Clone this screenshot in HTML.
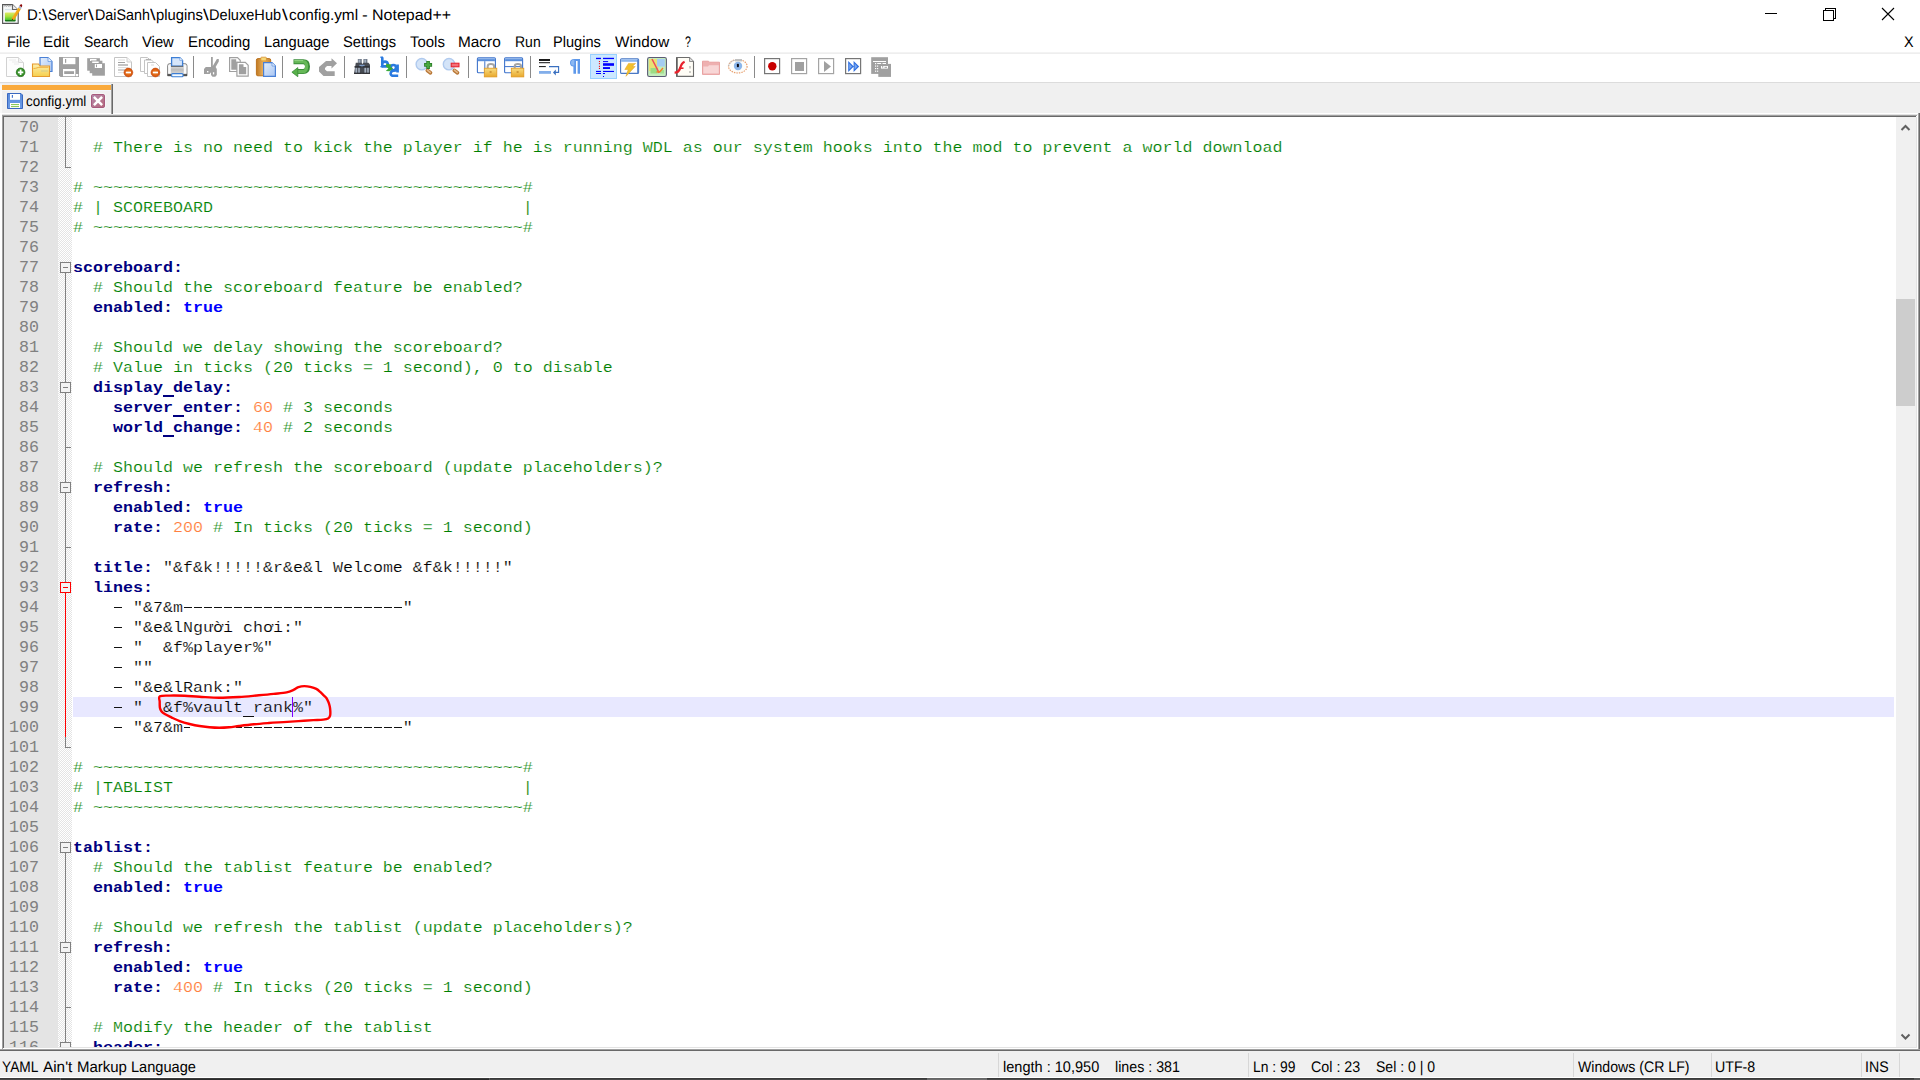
<!DOCTYPE html>
<html lang="en"><head><meta charset="utf-8"><title>D:\Server\DaiSanh\plugins\DeluxeHub\config.yml - Notepad++</title>
<style>
html,body{margin:0;padding:0}
body{width:1920px;height:1080px;overflow:hidden;background:#fff;position:relative;font-family:"Liberation Sans",sans-serif}
.a{position:absolute}
.t{position:absolute;white-space:pre;text-rendering:geometricPrecision;line-height:20px;height:20px;transform-origin:0 0;display:block}
#ed{position:absolute;left:0;top:117px;width:1920px;height:930px;overflow:hidden;background:#fff}
#nm{position:absolute;left:4px;top:0;width:54px;height:930px;background:#e4e4e4}
#fm{position:absolute;left:58px;top:0;width:14px;height:930px;background-color:#fff;background-image:conic-gradient(#fff 25%,#e4e4e4 0 50%,#fff 0 75%,#e4e4e4 0);background-size:2px 2px}
.ln,.no{position:absolute;height:19px;padding-top:1px;line-height:20px;font-family:"Liberation Mono",monospace;font-size:16.6667px;white-space:pre}
.ln{left:73px;width:1821px;color:#000;-webkit-text-stroke:.2px #fff}
.hl{-webkit-text-stroke-color:#e8e8ff}
.dash{position:absolute;height:1px;background:repeating-linear-gradient(90deg,transparent 0,transparent 1px,#111 1px,#111 9px,transparent 9px,transparent 10px)}
.ln{transform:scaleY(.89);transform-origin:0 15.5px}
.no{left:4px;width:35px;text-align:right;color:#808080}

.c{color:#008000}.k{color:#000080;font-weight:bold;-webkit-text-stroke:0}.w{color:#0000ff;font-weight:bold;-webkit-text-stroke:0}.n{color:#ff8040}
.sep{position:absolute;top:56px;width:1px;height:22px;background:#8a8a8a}
.ssep{position:absolute;top:1053px;width:1px;height:24px;background:#d7d7d7}
.ic{position:absolute;top:57px;width:20px;height:20px}
</style></head><body>
<!-- title bar -->
<svg class="a" style="left:0;top:0" width="28" height="28" viewBox="0 0 28 28">
<defs><linearGradient id="tg" x1="0" y1="0" x2="0" y2="1"><stop offset="0" stop-color="#e2ea68"/><stop offset=".45" stop-color="#a4e03c"/><stop offset=".8" stop-color="#4cc430"/><stop offset=".86" stop-color="#187818"/><stop offset="1" stop-color="#1c7c1c"/></linearGradient>
<linearGradient id="tp" x1="0" y1="0" x2="1" y2="1"><stop offset="0" stop-color="#fbd24a"/><stop offset=".5" stop-color="#f2a814"/><stop offset="1" stop-color="#c87c10"/></linearGradient></defs>
<path d="M2.600 4.600H12.500L18.200 10.300V23.400H2.600Z" fill="#f6f8f8" stroke="#565656" stroke-width="1.100"/>
<path d="M12.500 4.600V9.500H17.600" fill="#ececec" stroke="#666" stroke-width="1.100"/>
<path d="M4.200 6.500A1 1 0 0 1 6.200 6.500M6.600 6.500A1 1 0 0 1 8.600 6.500M9 6.500A1 1 0 0 1 11 6.500" fill="none" stroke="#9a9a9a" stroke-width=".9"/>
<path d="M5 9.600H12" stroke="#c4d8e0" stroke-width=".7"/>
<rect x="4.900" y="12.400" width="10.800" height="9.200" rx="1" fill="url(#tg)"/>
<path d="M12.300 20.300L11.800 18.200L18.300 7.600L20.800 9.200L14.300 19.700Z" fill="url(#tp)"/>
<path d="M12.300 20.300L11.900 18.600L13.300 19.500Z" fill="#3a2a10"/>
<path d="M18.300 7.600L19.400 5.800L21.800 7.400L20.800 9.200Z" fill="#a8b4c8"/>
<path d="M19.500 5.700Q20.300 3.700 21.700 4.300Q22.800 5.300 21.800 7.200Z" fill="#8c0808"/>
</svg>
<svg class="a" style="left:1760px;top:0" width="160" height="30" viewBox="0 0 160 30" shape-rendering="crispEdges" fill="none" stroke="#000" stroke-width="1">
<path d="M5 13.5H17"/>
<path d="M63.5 10.5H73.500V20.5H63.5Z"/><path d="M65.5 10.5V8.5H75.5V18.5H73.5"/>
<g shape-rendering="auto" stroke-width="1.1"><path d="M122 8L134 20M134 8L122 20"/></g>
</svg>
<!-- menu/toolbar separators -->
<div class="a" style="left:0;top:52px;width:1920px;height:1px;background:#f3f3f3"></div><div class="a" style="left:0;top:53px;width:1920px;height:1px;background:#eee"></div>
<div class="a" style="left:0;top:82px;width:1920px;height:1px;background:#dcdcdc"></div>
<!-- tab strip -->
<div class="a" style="left:0;top:83px;width:1920px;height:30px;background:#f0f0f0"></div>
<div class="a" style="left:2px;top:84px;width:109px;height:29px;background:#f0f0f0"></div>
<div class="a" style="left:2px;top:85px;width:109px;height:5px;background:#faaa3c"></div>
<div class="a" style="left:2px;top:90px;width:109px;height:1px;background:#f2f5fa"></div>
<svg class="a" style="left:6px;top:92px" width="18" height="18" viewBox="6 92 18 18">
<defs><linearGradient id="fb" x1="0" y1="0" x2="0" y2="1"><stop offset="0" stop-color="#5a8cdc"/><stop offset="1" stop-color="#6c9ce6"/></linearGradient></defs>
<path d="M7.500 93.500H21L22.500 95V108.500H7.500Z" fill="url(#fb)" stroke="#3a68c0" stroke-width="1"/>
<rect x="10" y="94" width="10" height="5.800" fill="#fff"/><rect x="11.800" y="95" width="1.200" height="2.800" fill="#4a78d0"/>
<rect x="10" y="103" width="10" height="5" fill="#fff"/><rect x="11" y="104" width="8" height="1.100" fill="#8cc85c"/><rect x="11" y="106" width="8" height="1.100" fill="#8cc85c"/>
</svg>
<svg class="a" style="left:90px;top:93px" width="16" height="16" viewBox="-1 -1 16 16">
<defs><linearGradient id="cb" x1="0" y1="0" x2="1" y2="1"><stop offset="0" stop-color="#b48aac"/><stop offset="1" stop-color="#b6687a"/></linearGradient></defs>
<rect x="-.8" y="-.8" width="15.600" height="15.600" rx="2" fill="#f7f8f8"/>
<rect x=".5" y=".5" width="13" height="13" rx="1.300" fill="url(#cb)" stroke="#a85a7e" stroke-width="1"/>
<path d="M3.800 3.800L10.200 10.200M10.200 3.800L3.800 10.200" stroke="#fff" stroke-width="2.500" stroke-linecap="square"/></svg>
<!-- editor frame -->
<div class="a" style="left:0;top:113px;width:1920px;height:1px;background:#fff"></div>
<div class="a" style="left:0;top:114px;width:1920px;height:1px;background:#e3e3e3"></div>
<div class="a" style="left:2px;top:115px;width:1915px;height:1px;background:#a0a0a0"></div>
<div class="a" style="left:3px;top:116px;width:1913px;height:1px;background:#696969"></div>
<div class="a" style="left:111px;top:84px;width:1px;height:30px;background:#a0a0a0"></div>
<div class="a" style="left:112px;top:84px;width:1px;height:30px;background:#696969"></div>
<div id="ed">
<div id="nm"></div><div id="fm"></div>
<div class="a" style="left:73px;top:580px;width:1821px;height:20px;background:#e8e8ff"></div>
<div class="no" style="top:0px">70</div>
<div class="no" style="top:20px">71</div>
<div class="no" style="top:40px">72</div>
<div class="no" style="top:60px">73</div>
<div class="no" style="top:80px">74</div>
<div class="no" style="top:100px">75</div>
<div class="no" style="top:120px">76</div>
<div class="no" style="top:140px">77</div>
<div class="no" style="top:160px">78</div>
<div class="no" style="top:180px">79</div>
<div class="no" style="top:200px">80</div>
<div class="no" style="top:220px">81</div>
<div class="no" style="top:240px">82</div>
<div class="no" style="top:260px">83</div>
<div class="no" style="top:280px">84</div>
<div class="no" style="top:300px">85</div>
<div class="no" style="top:320px">86</div>
<div class="no" style="top:340px">87</div>
<div class="no" style="top:360px">88</div>
<div class="no" style="top:380px">89</div>
<div class="no" style="top:400px">90</div>
<div class="no" style="top:420px">91</div>
<div class="no" style="top:440px">92</div>
<div class="no" style="top:460px">93</div>
<div class="no" style="top:480px">94</div>
<div class="no" style="top:500px">95</div>
<div class="no" style="top:520px">96</div>
<div class="no" style="top:540px">97</div>
<div class="no" style="top:560px">98</div>
<div class="no" style="top:580px">99</div>
<div class="no" style="top:600px">100</div>
<div class="no" style="top:620px">101</div>
<div class="no" style="top:640px">102</div>
<div class="no" style="top:660px">103</div>
<div class="no" style="top:680px">104</div>
<div class="no" style="top:700px">105</div>
<div class="no" style="top:720px">106</div>
<div class="no" style="top:740px">107</div>
<div class="no" style="top:760px">108</div>
<div class="no" style="top:780px">109</div>
<div class="no" style="top:800px">110</div>
<div class="no" style="top:820px">111</div>
<div class="no" style="top:840px">112</div>
<div class="no" style="top:860px">113</div>
<div class="no" style="top:880px">114</div>
<div class="no" style="top:900px">115</div>
<div class="no" style="top:920px">116</div>
<div style="position:absolute;left:65px;top:0px;width:1px;height:51px;background:#808080"></div>
<div style="position:absolute;left:65px;top:50px;width:6px;height:1px;background:#808080"></div>
<div style="position:absolute;left:60px;top:145px;width:9px;height:9px;border:1px solid #808080;background:#f3f3f3"><div style="position:absolute;left:2px;top:4px;width:5px;height:1px;background:#808080"></div></div>
<div style="position:absolute;left:65px;top:156px;width:1px;height:109px;background:#808080"></div>
<div style="position:absolute;left:60px;top:265px;width:9px;height:9px;border:1px solid #808080;background:#f3f3f3"><div style="position:absolute;left:2px;top:4px;width:5px;height:1px;background:#808080"></div></div>
<div style="position:absolute;left:65px;top:276px;width:1px;height:89px;background:#808080"></div>
<div style="position:absolute;left:65px;top:330px;width:6px;height:1px;background:#808080"></div>
<div style="position:absolute;left:60px;top:365px;width:9px;height:9px;border:1px solid #808080;background:#f3f3f3"><div style="position:absolute;left:2px;top:4px;width:5px;height:1px;background:#808080"></div></div>
<div style="position:absolute;left:65px;top:376px;width:1px;height:89px;background:#808080"></div>
<div style="position:absolute;left:65px;top:430px;width:6px;height:1px;background:#808080"></div>
<div style="position:absolute;left:60px;top:465px;width:9px;height:9px;border:1px solid #ff0000;background:#f3f3f3"><div style="position:absolute;left:2px;top:4px;width:5px;height:1px;background:#ff0000"></div></div>
<div style="position:absolute;left:65px;top:476px;width:1px;height:144px;background:#ff0000"></div>
<div style="position:absolute;left:65px;top:620px;width:1px;height:11px;background:#808080"></div>
<div style="position:absolute;left:65px;top:630px;width:6px;height:1px;background:#808080"></div>
<div style="position:absolute;left:60px;top:725px;width:9px;height:9px;border:1px solid #808080;background:#f3f3f3"><div style="position:absolute;left:2px;top:4px;width:5px;height:1px;background:#808080"></div></div>
<div style="position:absolute;left:65px;top:736px;width:1px;height:89px;background:#808080"></div>
<div style="position:absolute;left:60px;top:825px;width:9px;height:9px;border:1px solid #808080;background:#f3f3f3"><div style="position:absolute;left:2px;top:4px;width:5px;height:1px;background:#808080"></div></div>
<div style="position:absolute;left:65px;top:836px;width:1px;height:89px;background:#808080"></div>
<div style="position:absolute;left:65px;top:890px;width:6px;height:1px;background:#808080"></div>
<div style="position:absolute;left:60px;top:925px;width:9px;height:9px;border:1px solid #808080;background:#f3f3f3"><div style="position:absolute;left:2px;top:4px;width:5px;height:1px;background:#808080"></div></div>
<div class="ln" style="top:0px"></div>
<div class="ln" style="top:20px">  <span class="c"># There is no need to kick the player if he is running WDL as our system hooks into the mod to prevent a world download</span></div>
<div class="ln" style="top:40px"></div>
<div class="ln" style="top:60px"><span class="c"># ~~~~~~~~~~~~~~~~~~~~~~~~~~~~~~~~~~~~~~~~~~~#</span></div>
<div class="ln" style="top:80px"><span class="c"># | SCOREBOARD                               |</span></div>
<div class="ln" style="top:100px"><span class="c"># ~~~~~~~~~~~~~~~~~~~~~~~~~~~~~~~~~~~~~~~~~~~#</span></div>
<div class="ln" style="top:120px"></div>
<div class="ln" style="top:140px"><span class="k">scoreboard:</span></div>
<div class="ln" style="top:160px">  <span class="c"># Should the scoreboard feature be enabled?</span></div>
<div class="ln" style="top:180px">  <span class="k">enabled:</span> <span class="w">true</span></div>
<div class="ln" style="top:200px"></div>
<div class="ln" style="top:220px">  <span class="c"># Should we delay showing the scoreboard?</span></div>
<div class="ln" style="top:240px">  <span class="c"># Value in ticks (20 ticks = 1 second), 0 to disable</span></div>
<div class="a" style="left:162.5px;top:278px;width:11px;height:2px;background:#000080"></div>
<div class="ln" style="top:260px">  <span class="k">display delay:</span></div>
<div class="a" style="left:172.5px;top:298px;width:11px;height:2px;background:#000080"></div>
<div class="ln" style="top:280px">    <span class="k">server enter:</span> <span class="n">60</span> <span class="c"># 3 seconds</span></div>
<div class="a" style="left:162.5px;top:318px;width:11px;height:2px;background:#000080"></div>
<div class="ln" style="top:300px">    <span class="k">world change:</span> <span class="n">40</span> <span class="c"># 2 seconds</span></div>
<div class="ln" style="top:320px"></div>
<div class="ln" style="top:340px">  <span class="c"># Should we refresh the scoreboard (update placeholders)?</span></div>
<div class="ln" style="top:360px">  <span class="k">refresh:</span></div>
<div class="ln" style="top:380px">    <span class="k">enabled:</span> <span class="w">true</span></div>
<div class="ln" style="top:400px">    <span class="k">rate:</span> <span class="n">200</span> <span class="c"># In ticks (20 ticks = 1 second)</span></div>
<div class="ln" style="top:420px"></div>
<div class="ln" style="top:440px">  <span class="k">title:</span> &quot;&amp;f&amp;k!!!!!&amp;r&amp;e&amp;l Welcome &amp;f&amp;k!!!!!&quot;</div>
<div class="ln" style="top:460px">  <span class="k">lines:</span></div>
<div class="dash" style="left:113px;top:490px;width:10px"></div>
<div class="dash" style="left:183px;top:490px;width:220px"></div>
<div class="ln" style="top:480px">      &quot;&amp;7&amp;m                      &quot;</div>
<div class="dash" style="left:113px;top:510px;width:10px"></div>
<div class="ln" style="top:500px">      &quot;&amp;e&amp;lNgười chơi:&quot;</div>
<div class="dash" style="left:113px;top:530px;width:10px"></div>
<div class="ln" style="top:520px">      &quot;  &amp;f%player%&quot;</div>
<div class="dash" style="left:113px;top:550px;width:10px"></div>
<div class="ln" style="top:540px">      &quot;&quot;</div>
<div class="dash" style="left:113px;top:570px;width:10px"></div>
<div class="ln" style="top:560px">      &quot;&amp;e&amp;lRank:&quot;</div>
<div class="a" style="left:243px;top:599px;width:11px;height:1px;background:#111"></div>
<div class="dash" style="left:113px;top:590px;width:10px"></div>
<div class="ln hl" style="top:580px">      &quot;  &amp;f%vault rank%&quot;</div>
<div class="dash" style="left:113px;top:610px;width:10px"></div>
<div class="dash" style="left:183px;top:610px;width:220px"></div>
<div class="ln" style="top:600px">      &quot;&amp;7&amp;m                      &quot;</div>
<div class="ln" style="top:620px"></div>
<div class="ln" style="top:640px"><span class="c"># ~~~~~~~~~~~~~~~~~~~~~~~~~~~~~~~~~~~~~~~~~~~#</span></div>
<div class="ln" style="top:660px"><span class="c"># |TABLIST                                   |</span></div>
<div class="ln" style="top:680px"><span class="c"># ~~~~~~~~~~~~~~~~~~~~~~~~~~~~~~~~~~~~~~~~~~~#</span></div>
<div class="ln" style="top:700px"></div>
<div class="ln" style="top:720px"><span class="k">tablist:</span></div>
<div class="ln" style="top:740px">  <span class="c"># Should the tablist feature be enabled?</span></div>
<div class="ln" style="top:760px">  <span class="k">enabled:</span> <span class="w">true</span></div>
<div class="ln" style="top:780px"></div>
<div class="ln" style="top:800px">  <span class="c"># Should we refresh the tablist (update placeholders)?</span></div>
<div class="ln" style="top:820px">  <span class="k">refresh:</span></div>
<div class="ln" style="top:840px">    <span class="k">enabled:</span> <span class="w">true</span></div>
<div class="ln" style="top:860px">    <span class="k">rate:</span> <span class="n">400</span> <span class="c"># In ticks (20 ticks = 1 second)</span></div>
<div class="ln" style="top:880px"></div>
<div class="ln" style="top:900px">  <span class="c"># Modify the header of the tablist</span></div>
<div class="ln" style="top:920px">  <span class="k">header:</span></div>
<div class="a" style="left:292px;top:580px;width:1px;height:20px;background:#8000ff"></div>
<!-- scrollbar -->
<div class="a" style="left:1896px;top:0;width:20px;height:930px;background:#f0f0f0"></div>
<div class="a" style="left:1896px;top:182px;width:19px;height:107px;background:#cdcdcd"></div>
<svg class="a" style="left:1896px;top:0" width="20" height="21" viewBox="0 0 20 21" fill="none" stroke="#606060" stroke-width="2"><path d="M5.5 13L9.500 9L13.500 13"/></svg>
<svg class="a" style="left:1896px;top:909px" width="20" height="21" viewBox="0 0 20 21" fill="none" stroke="#606060" stroke-width="2"><path d="M5.5 8.500L9.500 12.500L13.500 8.500"/></svg>
<div class="a" style="left:1916px;top:0;width:1px;height:930px;background:#e3e3e3"></div>
<div class="a" style="left:1917px;top:0;width:1px;height:930px;background:#fff"></div>
<div class="a" style="left:190px;top:606px;width:46px;height:9px;background:#fff"></div>
<svg class="a" style="left:0;top:0" width="400" height="930" viewBox="0 0 400 930"><path d="M159.9 579.3C161.6 578.3 165.7 578.7 169.8 578.6C173.9 578.5 179.7 578.6 184.6 578.8C189.5 579.0 193.7 579.5 199.5 579.8C205.3 580.1 212.7 580.8 219.3 580.8C225.9 580.8 232.5 580.4 239.1 580.0C245.7 579.6 253.1 578.8 258.9 578.3C264.7 577.8 269.1 577.4 273.7 576.9C278.3 576.4 283.3 576.1 286.6 575.4C289.9 574.7 291.5 573.8 293.5 572.9C295.5 572.0 296.6 570.7 298.4 570.1C300.2 569.5 302.4 569.1 304.4 569.1C306.4 569.1 308.3 569.4 310.3 569.9C312.3 570.4 314.7 571.1 316.3 571.9C317.9 572.7 319.1 573.9 320.2 574.9C321.3 575.9 322.2 576.8 323.2 577.8C324.2 578.8 325.4 579.7 326.2 580.8C327.0 581.9 327.5 583.0 328.1 584.3C328.7 585.6 329.2 587.1 329.6 588.7C330.0 590.3 330.2 592.1 330.3 593.7C330.4 595.4 330.5 597.3 330.1 598.6C329.7 599.9 329.2 600.9 328.1 601.6C327.0 602.3 325.7 602.4 323.2 602.6C320.7 602.9 317.4 602.9 313.3 603.1C309.2 603.4 303.3 603.8 298.4 604.1C293.4 604.4 288.5 604.8 283.6 605.1C278.7 605.4 273.8 605.6 268.8 606.0C263.9 606.4 258.9 606.8 253.9 607.3C248.9 607.8 243.2 608.5 239.1 609.0C235.0 609.5 232.5 610.0 229.2 610.3C225.9 610.6 222.6 610.8 219.3 610.8C216.0 610.8 212.7 610.6 209.4 610.3C206.1 610.0 202.8 609.5 199.5 609.0C196.2 608.5 192.9 607.8 189.6 607.0C186.3 606.2 182.7 605.2 179.7 604.1C176.7 603.0 174.3 601.8 171.8 600.6C169.3 599.4 166.5 598.2 164.8 597.1C163.1 596.0 162.2 595.3 161.4 594.2C160.6 593.1 160.2 592.3 159.9 590.7C159.6 589.1 159.7 586.7 159.7 584.8C159.7 582.9 158.2 580.3 159.9 579.3Z" fill="none" stroke="#ff0000" stroke-width="2.400" stroke-linejoin="round"/></svg>
</div>
<div class="a" style="left:0;top:113px;width:2px;height:937px;background:#fff"></div>
<div class="a" style="left:2px;top:115px;width:1px;height:935px;background:#a0a0a0"></div>
<div class="a" style="left:3px;top:116px;width:1px;height:933px;background:#696969"></div>
<div class="a" style="left:0;top:84px;width:2px;height:29px;background:#f8f8f8"></div>
<div class="a" style="left:1918px;top:113px;width:1px;height:937px;background:#a0a0a0"></div>
<div class="a" style="left:1919px;top:113px;width:1px;height:937px;background:#696969"></div>
<!-- bottom frame + status bar -->
<div class="a" style="left:4px;top:1047px;width:1913px;height:1px;background:#e3e3e3"></div><div class="a" style="left:3px;top:1048px;width:1915px;height:1px;background:#fff"></div>
<div class="a" style="left:0px;top:1049px;width:1920px;height:1px;background:#a0a0a0"></div>
<div class="a" style="left:0px;top:1050px;width:1920px;height:1px;background:#696969"></div>
<div class="a" style="left:0;top:1051px;width:1920px;height:26px;background:#f0f0f0"></div>
<div class="a" style="left:0;top:1077px;width:1920px;height:1px;background:#fff"></div>
<div class="a" style="left:0;top:1078px;width:1920px;height:1px;background:#3a3a3a"></div><div class="a" style="left:0;top:1079px;width:1920px;height:1px;background:#484848"></div>
<div class="a" style="left:61px;top:1079px;width:428px;height:1px;background:#2c2c2c"></div>
<div class="a" style="left:60px;top:1078px;width:1px;height:2px;background:#5a5a5a"></div><div class="a" style="left:489px;top:1078px;width:1px;height:2px;background:#5a5a5a"></div>
<div class="a" style="left:927px;top:1078px;width:60px;height:1px;background:#666"></div><div class="a" style="left:927px;top:1079px;width:60px;height:1px;background:#6e6e6e"></div>
<div class="a" style="left:1914px;top:1078px;width:6px;height:2px;background:#5a5a5a"></div>
<div class="ssep" style="left:998px"></div><div class="ssep" style="left:1248px"></div><div class="ssep" style="left:1573px"></div>
<div class="ssep" style="left:1711px"></div><div class="ssep" style="left:1861px"></div><div class="ssep" style="left:1899px"></div>
<!-- toolbar -->
<div class="a" style="left:590px;top:54px;width:25px;height:23px;background:#cce8ff;border:1px solid #99d1ff"></div>
<div class="sep" style="left:193px"></div><div class="sep" style="left:282px"></div><div class="sep" style="left:344px"></div><div class="sep" style="left:406px"></div><div class="sep" style="left:468px"></div><div class="sep" style="left:530px"></div><div class="sep" style="left:754px"></div>
<svg class="a" style="left:0;top:54px" width="900" height="28" viewBox="0 54 900 28">
<defs>
<linearGradient id="gb" x1="0" y1="0" x2="1" y2="1"><stop offset="0" stop-color="#e4eefc"/><stop offset="1" stop-color="#a9c6f3"/></linearGradient>
<linearGradient id="gf" x1="0" y1="0" x2="0" y2="1"><stop offset="0" stop-color="#fdf0b0"/><stop offset="1" stop-color="#f6cf4c"/></linearGradient>
<linearGradient id="gp" x1="0" y1="0" x2="0" y2="1"><stop offset="0" stop-color="#f4f4f4"/><stop offset=".5" stop-color="#bdbdbd"/><stop offset="1" stop-color="#e2e2e2"/></linearGradient>
<linearGradient id="gl" x1="0" y1="0" x2="0" y2="1"><stop offset="0" stop-color="#f8dc80"/><stop offset="1" stop-color="#e8a82c"/></linearGradient>
<linearGradient id="gc" x1="0" y1="0" x2="1" y2="0"><stop offset="0" stop-color="#c07820"/><stop offset=".5" stop-color="#eab466"/><stop offset="1" stop-color="#c88430"/></linearGradient>
<linearGradient id="gw" x1="0" y1="0" x2="0" y2="1"><stop offset="0" stop-color="#7aa6e6"/><stop offset="1" stop-color="#4f86d6"/></linearGradient>
<radialGradient id="go"><stop offset="0" stop-color="#f08a2a"/><stop offset="1" stop-color="#d4500a"/></radialGradient>
<radialGradient id="gg"><stop offset="0" stop-color="#58b848"/><stop offset="1" stop-color="#2c801e"/></radialGradient>
</defs>
<!-- 1 new -->
<path d="M6.5 57.500H18.500L23.500 62.500V76.500H6.500Z" fill="#fdfdfd" stroke="#d2d2d2"/>
<path d="M18.500 57.500V62.500H23.500" fill="#f2f2f2" stroke="#dadada"/>
<path d="M9 60H16M12 62H18M14 64H19" stroke="#ebebeb" stroke-width="1.2"/>
<circle cx="20.600" cy="72.300" r="4.300" fill="url(#gg)" stroke="#2a7a1e" stroke-width=".8"/>
<path d="M17.900 72.300H23.300M20.600 69.600V75" stroke="#fff" stroke-width="1.700"/>
<!-- 2 open -->
<path d="M40 57.500H48L52 61.500V71.500H40Z" fill="url(#gb)" stroke="#4a80d6" stroke-width="1.200"/>
<path d="M48 57.500V61.500H52" fill="#e8f0fc" stroke="#6a9ae0" stroke-width=".8"/>
<path d="M32.500 64H38.500L40 66H49.500V76.500H32.500Z" fill="url(#gf)" stroke="#e59a2d" stroke-width="1.100"/>
<path d="M33.500 68.500C37 68.500 37 67.300 40 67.300H48.500" fill="none" stroke="#f0b040" stroke-width="1"/>
<path d="M41 71H48" stroke="#c8c890" stroke-width=".8"/>
<!-- 3 save (disabled) -->
<path d="M59 57H79V77H60.500L59 75.500Z" fill="#a0a0a0"/>
<rect x="63" y="57.800" width="12.400" height="6.400" fill="#fff"/><rect x="65" y="59" width="1.200" height="3.800" fill="#a0a0a0"/>
<rect x="63" y="69" width="12.400" height="7.200" fill="#fff"/><rect x="64.200" y="71.200" width="9.800" height="2.800" fill="#a0a0a0"/>
<rect x="76" y="74" width="2.200" height="2.200" fill="#fff"/>
<!-- 4 save all (disabled) -->
<g fill="#a0a0a0"><rect x="87.200" y="58.200" width="12.700" height="12.500"/><rect x="89.700" y="60.700" width="12.700" height="12.500"/><rect x="92.200" y="63.200" width="12.700" height="12.500"/></g>
<g fill="#fff"><rect x="90" y="59" width="6.500" height="1.500"/><rect x="92.200" y="61.500" width="6.500" height="1.500"/><rect x="94.800" y="64" width="7.200" height="4"/><rect x="90" y="59" width="1" height="2"/></g><rect x="96" y="64.500" width="1" height="2.700" fill="#a0a0a0"/>
<!-- 5 close -->
<path d="M114.500 57.500H127L131.500 62V76.500H114.500Z" fill="#fff" stroke="#c4c4c4"/>
<path d="M127 57.500V62H131.500" fill="#f4f4f4" stroke="#d0d0d0"/>
<path d="M118 60H125" stroke="#e6e6e6" stroke-width="1.400"/><path d="M118 62.500H125" stroke="#8a8a8a" stroke-width=".8"/><path d="M118 65H128" stroke="#b4b4b4" stroke-width="1.600"/><path d="M118 67.600H128" stroke="#cfcfcf" stroke-width=".8"/><path d="M118 70H125" stroke="#c4c4c4" stroke-width="1.600"/><path d="M118 72.600H124" stroke="#d8d8d8" stroke-width=".8"/>
<circle cx="128.400" cy="72.500" r="4.400" fill="url(#go)" stroke="#c8480a" stroke-width=".6"/><path d="M125.800 72.500H131" stroke="#fff" stroke-width="1.700"/>
<!-- 6 close all -->
<g fill="#fff" stroke="#c4c4c4"><path d="M140.500 57.500H147.500L150.500 60.500V71.500H140.500Z"/><path d="M144.500 60H151.500L154.500 63V73.500H144.500Z"/><path d="M147.500 62.500H155.500L159.500 66.500V76.500H147.500Z"/></g>
<path d="M146 59.500H151" stroke="#b0b0b0" stroke-width="1.200"/><path d="M151 65H154" stroke="#e4e4e4" stroke-width="1.500"/>
<circle cx="155.400" cy="72.500" r="4.400" fill="url(#go)" stroke="#c8480a" stroke-width=".6"/><path d="M152.800 72.500H158" stroke="#fff" stroke-width="1.700"/>
<!-- 7 print -->
<path d="M167.600 65.800Q167.600 63.600 169.800 63.600H184.800Q187 63.600 187 65.800V75.800H167.600Z" fill="url(#gp)" stroke="#7a7a7a" stroke-width=".9"/>
<rect x="168.200" y="65" width="2.600" height="8.600" rx="1.200" fill="#fafafa"/><rect x="183.800" y="65" width="2.600" height="8.600" rx="1.200" fill="#fafafa"/>
<path d="M167.600 75H187" stroke="#3c3c3c" stroke-width="1.600"/>
<path d="M171.600 66.200V57.600H179.800L182.600 60.400V66.200Z" fill="#d6e6fb" stroke="#3d7fd6" stroke-width="1.300"/>
<path d="M179.800 57.600V60.400H182.600" fill="#fff" stroke="#6a9ae0" stroke-width=".7"/>
<path d="M171 66.400H183.200" stroke="#6c6c6c" stroke-width="1"/>
<rect x="171.600" y="73.600" width="11.400" height="3.200" rx="1" fill="#f4fbff" stroke="#3d7fd6" stroke-width="1.100"/>
<!-- 8 cut (disabled) -->
<path d="M211 57H212.800V66L216.900 59H218.800V61.600L215.600 67L216.800 69V75L215.300 76.700H212.500L211 75V72.200L209.600 73.900H204V69L205.800 67.100H211Z" fill="#a0a0a0"/>
<rect x="207" y="71" width="1.400" height="1.400" fill="#fff"/><rect x="212.900" y="72.200" width="1.300" height="2.200" fill="#fff"/>
<!-- 9 copy (disabled) -->
<path d="M229.600 57.600H237.500L240.200 60.300V71.500H229.600Z" fill="#fff" stroke="#a0a0a0" stroke-width="1.200"/><path d="M231.300 59.300H236.200V61.800H238.500V69.800H231.300Z" fill="#a0a0a0"/>
<path d="M236.900 62.400H245.300L248.200 65.300V76.200H236.900Z" fill="#fff" stroke="#a0a0a0" stroke-width="1.200"/><path d="M238.900 64.300H243.500V67H246.200V74.300H238.900Z" fill="#a0a0a0"/>
<!-- 10 paste -->
<rect x="256.400" y="58.600" width="14.300" height="17.200" rx="1.500" fill="url(#gc)" stroke="#b86c14" stroke-width=".9"/>
<rect x="260.800" y="57.200" width="5.600" height="3.700" rx=".8" fill="#f6d878" stroke="#d89030" stroke-width=".8"/>
<path d="M263.600 62.700H272L275.400 66V76.300H263.600Z" fill="url(#gb)" stroke="#4a80d6" stroke-width="1.200"/>
<path d="M272 62.700V66H275.400" fill="#e8f0fc" stroke="#6a9ae0" stroke-width=".8"/>
<!-- 11 undo -->
<path d="M293.500 61.700H303.200Q307.500 61.700 307.500 66.600Q307.500 71.600 303.200 71.600H297" fill="none" stroke="#3a8c38" stroke-width="5"/>
<path d="M294.200 61.700H303.200Q306.600 61.700 306.600 66.600Q306.600 71.600 303.200 71.600H297" fill="none" stroke="#66b858" stroke-width="3.200"/>
<path d="M294.400 60.600H303" stroke="#90d484" stroke-width="1"/>
<path d="M291.900 72.200L297.800 67.600V76.700Z" fill="#58b04a" stroke="#3a8c38" stroke-width=".8"/>
<!-- 12 redo (disabled) -->
<path d="M331.500 61H326L319 67V71.500L323.500 76H334.700V71.300H327L325 69.500V68L327 66H331.500V68.600L337 63.300L331.500 58.200Z" fill="#a0a0a0"/>
<!-- 13 find -->
<g fill="#484c54"><rect x="357.800" y="59" width="4" height="5" fill="#727c8a"/><rect x="363.400" y="59" width="4" height="5" fill="#727c8a"/><path d="M355.800 62.800H361.600L362.400 64.500V73.700H354Z"/><path d="M363.400 62.800H368.400L370 64.500V73.700H361.800V64.500Z"/><rect x="360" y="64.500" width="4" height="3.700"/></g>
<g fill="#a4b0c0"><rect x="355.400" y="67.600" width="1.800" height="5.200"/><rect x="358.200" y="67.600" width="1.600" height="5.200"/><rect x="364.400" y="67.600" width="1.800" height="5.200"/><rect x="367.200" y="67.600" width="1.600" height="5.200"/><rect x="358.600" y="59.600" width="1.600" height="3"/><rect x="364.400" y="59.600" width="1.600" height="3"/><rect x="359.400" y="64.800" width="5.200" height="1.800" fill="#7c9cc8"/></g>
<path d="M354 73.300H361.800M362.200 73.300H370" stroke="#18181c" stroke-width=".9"/><path d="M354.400 66.800H361.600M362.400 66.800H369.600" stroke="#26282e" stroke-width="1.200"/>
<!-- 14 replace -->
<g fill="none" stroke="#2a7ae0" stroke-width="2.600"><path d="M382.300 57.300V66.800"/><path d="M382.300 62.600Q385 60.700 387.200 62.400Q388.800 64.600 386.600 66.400H381.500"/><circle cx="393.400" cy="67.600" r="2.600"/><path d="M397.600 64.400V72.600M397.800 70.800Q394 69.600 391.200 71.800Q389.600 74.600 392.400 75.800H398.200"/></g>
<path d="M380.400 57.300H383M380.400 66.600H383" stroke="#2a7ae0" stroke-width="1.400"/>
<path d="M386.400 63.800L391.400 64.400L390.200 66.400L393 68.400L389.600 71.200L385.800 71L388.400 68.600L385.800 66.400Z" fill="#3aa83a"/>
<!-- 15 zoom in -->
<path d="M427.400 70.400L430.400 72.800" stroke="#b87838" stroke-width="3.800" stroke-linecap="round"/><path d="M427.400 70.200L430.200 72.400" stroke="#e4b888" stroke-width="1.600" stroke-linecap="round"/>
<circle cx="421.800" cy="64.200" r="5.700" fill="#d4e4f8" stroke="#b0caee" stroke-width="1.400"/>
<path d="M428.100 60.900V68.900M424.100 64.900H432.100" stroke="#2c7c28" stroke-width="3.600"/><path d="M428.100 61.700V68.100M424.900 64.900H431.300" stroke="#48a840" stroke-width="2.200"/>
<!-- 16 zoom out -->
<path d="M454.400 70.400L457.400 72.800" stroke="#b87838" stroke-width="3.800" stroke-linecap="round"/><path d="M454.400 70.200L457.200 72.400" stroke="#e4b888" stroke-width="1.600" stroke-linecap="round"/>
<circle cx="449" cy="64.200" r="5.700" fill="#d4e4f8" stroke="#b0caee" stroke-width="1.400"/>
<rect x="451.200" y="63.200" width="7.800" height="3.600" fill="#f27078" stroke="#e41c28" stroke-width="1"/>
<!-- 17 sync v -->
<rect x="477.400" y="57.800" width="18" height="15" rx="1" fill="#fff" stroke="#3f74cc" stroke-width="1.100"/><rect x="477.900" y="58.300" width="17" height="2.900" fill="url(#gw)"/><path d="M484.800 61.200V72.800" stroke="#3f74cc" stroke-width="1"/>
<path d="M487.700 68.500V66.200Q487.700 63.900 490.900 63.900Q494.100 63.900 494.100 66.200V68.500" fill="none" stroke="#a4a4a4" stroke-width="2"/>
<rect x="484.300" y="68.200" width="12.500" height="8.700" fill="url(#gl)" stroke="#e09820" stroke-width=".8"/><rect x="489.600" y="71.200" width="2" height="1.600" fill="#c89030"/>
<!-- 18 sync h -->
<rect x="504.600" y="57.800" width="18" height="15" rx="1" fill="#fff" stroke="#3f74cc" stroke-width="1.100"/><rect x="505.100" y="58.300" width="17" height="2.900" fill="url(#gw)"/><path d="M505 66.600H522.500" stroke="#3f74cc" stroke-width="1"/>
<path d="M514.700 68.500V66.200Q514.700 63.900 517.900 63.900Q521.100 63.900 521.100 66.200V68.500" fill="none" stroke="#a4a4a4" stroke-width="2"/>
<rect x="511.300" y="68.200" width="12.500" height="8.700" fill="url(#gl)" stroke="#e09820" stroke-width=".8"/><rect x="516.600" y="71.200" width="2" height="1.600" fill="#c89030"/>
<!-- 19 wrap -->
<rect x="539" y="59" width="11" height="2" fill="#1a1a1a"/><rect x="539" y="62.200" width="11" height="1" fill="#111"/><rect x="539" y="66.100" width="6.800" height="1" fill="#111"/><rect x="539" y="71" width="12" height="2.800" fill="#82aeea"/>
<path d="M549 66.600H558.600V72.400H554" fill="none" stroke="#3a70c0" stroke-width="1.100"/><path d="M553 72.400L555.800 69.400V75.600Z" fill="#3a70c0"/>
<!-- 20 all chars -->
<path d="M574.300 59H580V73.700H577.600V61H576V73.700H573.400V66.400Q570 66.400 570 62.700Q570 59 574.300 59Z" fill="#5e98ea"/><path d="M574.300 59.800V65.600Q571 65.600 571 62.700Q571 59.800 574.300 59.800Z" fill="#8cb8f2"/>
<!-- 21 indent guide -->
<g fill="#0000ff"><rect x="596" y="57.800" width="5" height="1.300"/><rect x="603" y="57.800" width="11" height="1.300"/><rect x="603" y="61.100" width="5.100" height="1"/><rect x="603" y="63.200" width="11" height="2.600"/><rect x="603" y="67.100" width="7" height="1.900"/><rect x="596" y="70.900" width="5" height="1.100"/><rect x="603" y="70.900" width="11" height="1.100"/><rect x="596" y="73" width="5" height="1"/><rect x="603" y="73" width="2" height="1"/><rect x="603" y="76" width="1" height="1"/></g>
<g fill="#f01010"><rect x="598.900" y="61" width="1.100" height="1.100"/><rect x="598.900" y="63.100" width="1.100" height="1.100"/><rect x="598.900" y="65.800" width="1.100" height="1.100"/><rect x="598.900" y="67.900" width="1.100" height="1.100"/></g>
<!-- 22 UDL -->
<rect x="620.600" y="58.800" width="18" height="14.600" rx="1" fill="#fff" stroke="#4a78c4" stroke-width="1.100"/><rect x="621.100" y="59.300" width="17" height="2.500" fill="#8cb6ee"/><path d="M637.800 59.500V73" stroke="#5a88d0" stroke-width="1.400"/>
<path d="M628.500 63.400H635.600L632.300 66.500H635.200L626 76.300L628.200 69.500H624.800Z" fill="#f2c02c" stroke="#e0a020" stroke-width=".5"/>
<!-- 23 doc map -->
<rect x="647.600" y="57.500" width="18.800" height="19" rx="1.800" fill="#c4ecbc" stroke="#5c5c74" stroke-width="1.100"/>
<rect x="649" y="59" width="9.500" height="12" fill="#e8e274"/><rect x="657" y="59" width="7.800" height="7.500" fill="#a4ccf2"/><rect x="650.500" y="68" width="7" height="5.500" fill="#9cdc84"/><rect x="660" y="70" width="4" height="3.500" fill="#a4e08c"/>
<path d="M652 59L659.200 73" stroke="#f04858" stroke-width="1.500" fill="none"/><path d="M656.500 72L660 71.500L663 68" stroke="#f48028" stroke-width="1.400" fill="none"/>
<!-- 24 function list -->
<path d="M676.600 57.500H689.500L693.500 61.500V76.400H676.600Z" fill="#fffdf6" stroke="#6c6c6c" stroke-width="1.100"/><path d="M689.500 57.500V61.500H693.500" fill="#ddd" stroke="#7a7a7a" stroke-width=".8"/>
<path d="M677 58V76" stroke="#555" stroke-width="1.300"/>
<path d="M690 66V68.500M690 71V73" stroke="#909090" stroke-width=".9"/>
<path d="M674.600 72.600Q678.500 72.600 680 68.500Q681.500 63 684.600 61.800" fill="none" stroke="#e8202a" stroke-width="2.300"/><path d="M679 68.200H683.500" stroke="#e8202a" stroke-width="1.600"/>
<!-- 25 folder as workspace -->
<path d="M702.500 61.200H708.500L709.500 62.200H719.500V74.400H702.500Z" fill="#eeb0b0" stroke="#e89c9c" stroke-width=".9"/>
<path d="M703.300 66.400H708L709 65.200H718.800V73.600H703.300Z" fill="#f8d6d6"/>
<!-- 26 monitoring -->
<ellipse cx="737.800" cy="66.300" rx="9.300" ry="6.700" fill="#fdfdfb" stroke="#e8a070" stroke-width="1.200" stroke-dasharray="1.500 1"/>
<path d="M728.600 66Q730 60.600 737 59.800" fill="none" stroke="#c0c0c0" stroke-width="1.200" stroke-dasharray="1.500 1"/>
<rect x="735" y="59" width="7" height="2.400" fill="#c0c0c0"/>
<circle cx="738" cy="66" r="4.200" fill="#8cb6ea"/><rect x="736.900" y="63.800" width="2" height="3.400" rx=".8" fill="#0a0a14"/>
<!-- 27 rec -->
<rect x="764.600" y="58.600" width="15" height="15" fill="#fff" stroke="#767676" stroke-width="1.200"/><circle cx="772.300" cy="66.300" r="4.200" fill="#c80000"/>
<!-- 28 stop -->
<rect x="791.600" y="58.600" width="15" height="15" fill="#fff" stroke="#a4a4a4" stroke-width="1.200"/><rect x="795" y="62" width="9" height="9" fill="#a0a0a0"/>
<!-- 29 play -->
<rect x="818.600" y="58.600" width="15" height="15" fill="#fff" stroke="#a4a4a4" stroke-width="1.200"/><path d="M824 61V72L831 66.500Z" fill="#a0a0a0"/>
<!-- 30 play multi -->
<rect x="845.600" y="58.600" width="15" height="15" fill="#fff" stroke="#767676" stroke-width="1.200"/><path d="M848.200 61V72L853.800 66.500ZM853.600 61V72L859.200 66.500Z" fill="#2f6fe0"/><path d="M849.200 63.500V69.500L852 66.500ZM854.600 63.500V69.500L857.400 66.500Z" fill="#7aa8f0"/>
<!-- 31 save macro (disabled) -->
<rect x="871.200" y="57.200" width="16.800" height="16.700" fill="#a0a0a0"/><rect x="878.300" y="63.900" width="12.700" height="13" fill="#a0a0a0"/>
<g fill="#fff"><rect x="873" y="61" width="13" height="1"/><rect x="875" y="63" width="1.200" height="1.200"/><rect x="877.200" y="63" width="4" height="1"/><rect x="882.500" y="63" width="3.500" height="1"/><rect x="875" y="65.500" width="1.200" height="1.200"/><rect x="877" y="65.500" width="1.200" height="1.200"/><rect x="875" y="68" width="1.200" height="1.200"/><rect x="877" y="68" width="1.200" height="1.200"/><rect x="875" y="70.600" width="1.200" height="1.200"/><rect x="877" y="70.600" width="1.200" height="1.200"/><rect x="881" y="66" width="7" height="2.600"/></g><rect x="882.200" y="66" width="1" height="1.600" fill="#a0a0a0"/><rect x="884.500" y="66.800" width="2.500" height="1" fill="#a0a0a0"/>
</svg>

<!-- text -->
<span class="t" style="left:26.83px;top:6.00px;font-size:15.4px;color:#000;transform-origin:0 15.34px;transform:scale(0.9683,1)">D:</span>
<span class="t" style="left:41.70px;top:6.00px;font-size:15.4px;color:#000;transform-origin:0 15.34px;transform:scale(1.2929,1)">\</span>
<span class="t" style="left:47.68px;top:6.00px;font-size:15.4px;color:#000;transform-origin:0 15.34px;transform:scale(0.8750,1)">Server</span>
<span class="t" style="left:88.20px;top:6.00px;font-size:15.4px;color:#000;transform-origin:0 15.34px;transform:scale(1.3391,1)">\</span>
<span class="t" style="left:94.68px;top:6.00px;font-size:15.4px;color:#000;transform-origin:0 15.34px;transform:scale(0.9297,1)">DaiSanh</span>
<span class="t" style="left:149.80px;top:6.00px;font-size:15.4px;color:#000;transform-origin:0 15.34px;transform:scale(1.2929,1)">\</span>
<span class="t" style="left:155.68px;top:6.00px;font-size:15.4px;color:#000;transform-origin:0 15.34px;transform:scale(0.9608,1)">plugins</span>
<span class="t" style="left:202.90px;top:6.00px;font-size:15.4px;color:#000;transform-origin:0 15.34px;transform:scale(1.3391,1)">\</span>
<span class="t" style="left:209.36px;top:6.00px;font-size:15.4px;color:#000;transform-origin:0 15.34px;transform:scale(0.9467,1)">DeluxeHub</span>
<span class="t" style="left:282.00px;top:6.00px;font-size:15.4px;color:#000;transform-origin:0 15.34px;transform:scale(1.3391,1)">\</span>
<span class="t" style="left:288.82px;top:6.00px;font-size:15.4px;color:#000;transform-origin:0 15.34px;transform:scale(0.9967,1)">config.yml</span>
<span class="t" style="left:362.06px;top:6.00px;font-size:15.4px;color:#000;transform-origin:0 15.34px;transform:scale(1.1245,1)">-</span>
<span class="t" style="left:371.65px;top:6.00px;font-size:15.4px;color:#000;transform-origin:0 15.34px;transform:scale(1.0398,1)">Notepad++</span>
<span class="t" style="left:6.76px;top:33.00px;font-size:15.4px;color:#000;transform-origin:0 15.34px;transform:scale(0.9440,1)">File</span>
<span class="t" style="left:43.41px;top:33.00px;font-size:15.4px;color:#000;transform-origin:0 15.34px;transform:scale(0.9927,1)">Edit</span>
<span class="t" style="left:83.96px;top:33.00px;font-size:15.4px;color:#000;transform-origin:0 15.34px;transform:scale(0.9084,1)">Search</span>
<span class="t" style="left:142.00px;top:33.00px;font-size:15.4px;color:#000;transform-origin:0 15.34px;transform:scale(0.9613,1)">View</span>
<span class="t" style="left:187.83px;top:33.00px;font-size:15.4px;color:#000;transform-origin:0 15.34px;transform:scale(0.9719,1)">Encoding</span>
<span class="t" style="left:263.65px;top:33.00px;font-size:15.4px;color:#000;transform-origin:0 15.34px;transform:scale(0.9552,1)">Language</span>
<span class="t" style="left:343.04px;top:33.00px;font-size:15.4px;color:#000;transform-origin:0 15.34px;transform:scale(0.9528,1)">Settings</span>
<span class="t" style="left:410.37px;top:33.00px;font-size:15.4px;color:#000;transform-origin:0 15.34px;transform:scale(0.9708,1)">Tools</span>
<span class="t" style="left:458.20px;top:33.00px;font-size:15.4px;color:#000;transform-origin:0 15.34px;transform:scale(0.9986,1)">Macro</span>
<span class="t" style="left:514.51px;top:33.00px;font-size:15.4px;color:#000;transform-origin:0 15.34px;transform:scale(0.9090,1)">Run</span>
<span class="t" style="left:553.46px;top:33.00px;font-size:15.4px;color:#000;transform-origin:0 15.34px;transform:scale(0.9462,1)">Plugins</span>
<span class="t" style="left:615.40px;top:33.00px;font-size:15.4px;color:#000;transform-origin:0 15.34px;transform:scale(0.9898,1)">Window</span>
<span class="t" style="left:684.77px;top:33.00px;font-size:15.4px;color:#000;transform-origin:0 15.34px;transform:scale(0.6883,1)">?</span>
<span class="t" style="left:1903.58px;top:33.00px;font-size:15.4px;color:#000;transform-origin:0 15.34px;transform:scale(0.9325,1)">X</span>
<span class="t" style="left:26.18px;top:92.00px;font-size:14.5px;color:#000;transform-origin:0 15.02px;transform:scale(0.9239,1)">config.yml</span>
<span class="t" style="left:2.09px;top:1058.00px;font-size:15.4px;color:#000;transform-origin:0 15.34px;transform:scale(0.8912,1)">YAML</span>
<span class="t" style="left:43.10px;top:1058.00px;font-size:15.4px;color:#000;transform-origin:0 15.34px;transform:scale(0.9956,1)">Ain&#x27;t</span>
<span class="t" style="left:76.93px;top:1058.00px;font-size:15.4px;color:#000;transform-origin:0 15.34px;transform:scale(0.9733,1)">Markup</span>
<span class="t" style="left:131.16px;top:1058.00px;font-size:15.4px;color:#000;transform-origin:0 15.34px;transform:scale(0.9492,1)">Language</span>
<span class="t" style="left:1002.84px;top:1058.00px;font-size:15.4px;color:#000;transform-origin:0 15.34px;transform:scale(0.9448,1)">length : 10,950</span>
<span class="t" style="left:1114.86px;top:1058.00px;font-size:15.4px;color:#000;transform-origin:0 15.34px;transform:scale(0.9254,1)">lines : 381</span>
<span class="t" style="left:1252.67px;top:1058.00px;font-size:15.4px;color:#000;transform-origin:0 15.34px;transform:scale(0.9002,1)">Ln : 99</span>
<span class="t" style="left:1310.58px;top:1058.00px;font-size:15.4px;color:#000;transform-origin:0 15.34px;transform:scale(0.9280,1)">Col : 23</span>
<span class="t" style="left:1375.81px;top:1058.00px;font-size:15.4px;color:#000;transform-origin:0 15.34px;transform:scale(0.9114,1)">Sel : 0 | 0</span>
<span class="t" style="left:1578.20px;top:1058.00px;font-size:15.4px;color:#000;transform-origin:0 15.34px;transform:scale(0.9180,1)">Windows (CR LF)</span>
<span class="t" style="left:1715.31px;top:1058.00px;font-size:15.4px;color:#000;transform-origin:0 15.34px;transform:scale(0.9229,1)">UTF-8</span>
<span class="t" style="left:1865.49px;top:1058.00px;font-size:15.4px;color:#000;transform-origin:0 15.34px;transform:scale(0.9193,1)">INS</span>
</body></html>
